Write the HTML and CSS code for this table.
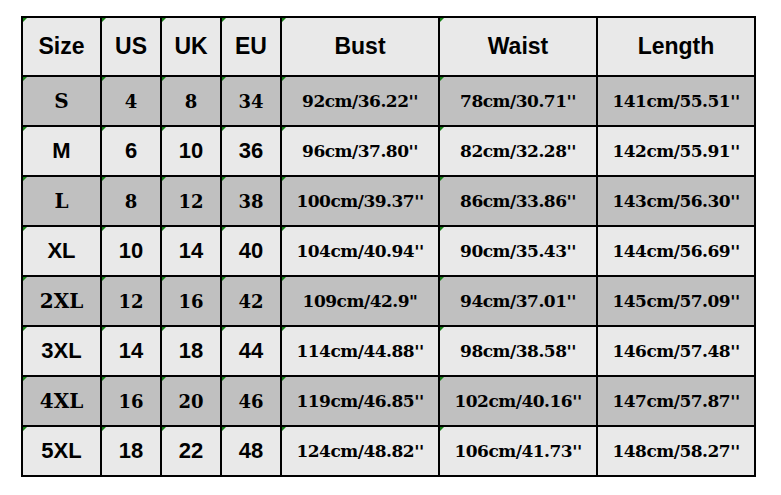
FILE: index.html
```html
<!DOCTYPE html>
<html>
<head>
<meta charset="utf-8">
<link rel="stylesheet" href="styles.css">
</head>
<body>
<div class="chart">
  <div class="cell head mark">Size</div>
  <div class="cell head mark">US</div>
  <div class="cell head mark">UK</div>
  <div class="cell head mark">EU</div>
  <div class="cell head mark">Bust</div>
  <div class="cell head mark">Waist</div>
  <div class="cell head">Length</div>

  <div class="cell dark serif size mark">S</div>
  <div class="cell dark serif mark">4</div>
  <div class="cell dark serif mark">8</div>
  <div class="cell dark serif mark">34</div>
  <div class="cell dark serif meas mark">92cm/36.22''</div>
  <div class="cell dark serif meas mark">78cm/30.71''</div>
  <div class="cell dark serif meas">141cm/55.51''</div>

  <div class="cell light sans mark">M</div>
  <div class="cell light sans mark">6</div>
  <div class="cell light sans mark">10</div>
  <div class="cell light sans mark">36</div>
  <div class="cell light serif meas mark">96cm/37.80''</div>
  <div class="cell light serif meas mark">82cm/32.28''</div>
  <div class="cell light serif meas">142cm/55.91''</div>

  <div class="cell dark serif size mark">L</div>
  <div class="cell dark serif mark">8</div>
  <div class="cell dark serif mark">12</div>
  <div class="cell dark serif mark">38</div>
  <div class="cell dark serif meas mark">100cm/39.37''</div>
  <div class="cell dark serif meas mark">86cm/33.86''</div>
  <div class="cell dark serif meas">143cm/56.30''</div>

  <div class="cell light sans mark">XL</div>
  <div class="cell light sans mark">10</div>
  <div class="cell light sans mark">14</div>
  <div class="cell light sans mark">40</div>
  <div class="cell light serif meas mark">104cm/40.94''</div>
  <div class="cell light serif meas mark">90cm/35.43''</div>
  <div class="cell light serif meas">144cm/56.69''</div>

  <div class="cell dark serif size mark">2XL</div>
  <div class="cell dark serif mark">12</div>
  <div class="cell dark serif mark">16</div>
  <div class="cell dark serif mark">42</div>
  <div class="cell dark serif meas mark">109cm/42.9"</div>
  <div class="cell dark serif meas mark">94cm/37.01''</div>
  <div class="cell dark serif meas">145cm/57.09''</div>

  <div class="cell light sans mark">3XL</div>
  <div class="cell light sans mark">14</div>
  <div class="cell light sans mark">18</div>
  <div class="cell light sans mark">44</div>
  <div class="cell light serif meas mark">114cm/44.88''</div>
  <div class="cell light serif meas mark">98cm/38.58''</div>
  <div class="cell light serif meas">146cm/57.48''</div>

  <div class="cell dark serif size mark">4XL</div>
  <div class="cell dark serif mark">16</div>
  <div class="cell dark serif mark">20</div>
  <div class="cell dark serif mark">46</div>
  <div class="cell dark serif meas mark">119cm/46.85''</div>
  <div class="cell dark serif meas mark">102cm/40.16''</div>
  <div class="cell dark serif meas">147cm/57.87''</div>

  <div class="cell light sans mark">5XL</div>
  <div class="cell light sans mark">18</div>
  <div class="cell light sans mark">22</div>
  <div class="cell light sans mark">48</div>
  <div class="cell light serif meas mark">124cm/48.82''</div>
  <div class="cell light serif meas mark">106cm/41.73''</div>
  <div class="cell light serif meas">148cm/58.27''</div>
</div>
</body>
</html>
```

FILE: styles.css
```css
html, body {
  margin: 0;
  padding: 0;
  background: #ffffff;
}

body {
  padding: 16px 0 0 21px;
}

.chart {
  display: grid;
  grid-template-columns: 77px 58px 58px 58px 156px 156px 156px;
  grid-template-rows: 57px repeat(8, 48px);
  gap: 2px;
  padding: 2px;
  background: #000000;
  width: max-content;
}

.cell {
  position: relative;
  display: flex;
  align-items: center;
  justify-content: center;
  color: #000000;
  white-space: nowrap;
}

.mark::before {
  content: "";
  position: absolute;
  left: 0;
  top: 0;
  width: 0;
  height: 0;
  border-top: 4px solid #138013;
  border-right: 4px solid transparent;
}

.head {
  background: #e9e9e9;
  font-family: "Liberation Sans", Arial, sans-serif;
  font-weight: bold;
  font-size: 23px;
}

.light {
  background: #e9e9e9;
}

.dark {
  background: #c0c0c0;
}

.sans {
  font-family: "Liberation Sans", Arial, sans-serif;
  font-weight: bold;
  font-size: 22px;
}

.serif {
  font-family: "DejaVu Serif", "Liberation Serif", serif;
  font-weight: bold;
  font-size: 18px;
}

.serif.size {
  font-size: 20px;
}

.serif.meas {
  font-size: 17px;
  letter-spacing: -0.5px;
}
```
